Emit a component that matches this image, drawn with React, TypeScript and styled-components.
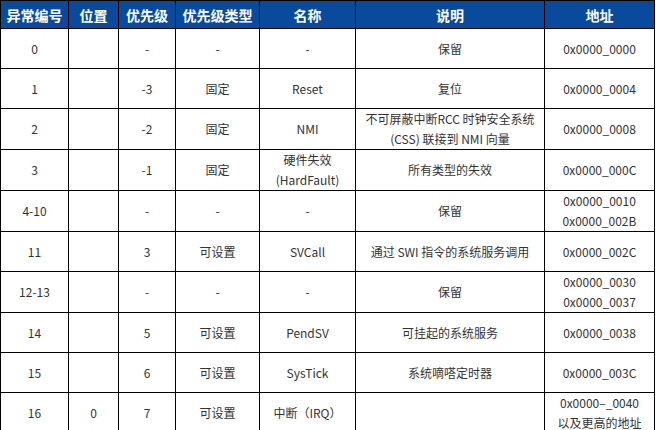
import React from "react";
import styled, { createGlobalStyle } from "styled-components";

const GlobalStyle = createGlobalStyle`
  html, body {
    margin: 0;
    padding: 0;
    background: #ffffff;
  }
  body {
    font-family: "Noto Sans CJK SC", "Noto Sans", sans-serif;
  }
`;

type Row = {
  id: string;
  pos?: string;
  priority: string;
  kind: string;
  name: React.ReactNode;
  desc: React.ReactNode;
  addr: React.ReactNode;
};

const rows: Row[] = [
  { id: "0", priority: "-", kind: "-", name: "-", desc: "保留", addr: "0x0000_0000" },
  { id: "1", priority: "-3", kind: "固定", name: "Reset", desc: "复位", addr: "0x0000_0004" },
  {
    id: "2",
    priority: "-2",
    kind: "固定",
    name: "NMI",
    desc: (
      <>
        不可屏蔽中断RCC 时钟安全系统
        <br />
        (CSS) 联接到 NMI 向量
      </>
    ),
    addr: "0x0000_0008",
  },
  {
    id: "3",
    priority: "-1",
    kind: "固定",
    name: (
      <>
        硬件失效
        <br />
        (HardFault)
      </>
    ),
    desc: "所有类型的失效",
    addr: "0x0000_000C",
  },
  {
    id: "4-10",
    priority: "-",
    kind: "-",
    name: "-",
    desc: "保留",
    addr: (
      <>
        0x0000_0010
        <br />
        0x0000_002B
      </>
    ),
  },
  { id: "11", priority: "3", kind: "可设置", name: "SVCall", desc: "通过 SWI 指令的系统服务调用", addr: "0x0000_002C" },
  {
    id: "12-13",
    priority: "-",
    kind: "-",
    name: "-",
    desc: "保留",
    addr: (
      <>
        0x0000_0030
        <br />
        0x0000_0037
      </>
    ),
  },
  { id: "14", priority: "5", kind: "可设置", name: "PendSV", desc: "可挂起的系统服务", addr: "0x0000_0038" },
  { id: "15", priority: "6", kind: "可设置", name: "SysTick", desc: "系统嘀嗒定时器", addr: "0x0000_003C" },
  {
    id: "16",
    pos: "0",
    priority: "7",
    kind: "可设置",
    name: "中断（IRQ）",
    desc: "",
    addr: (
      <>
        0x0000–_0040
        <br />
        以及更高的地址
      </>
    ),
  },
];

const widths = [68, 50, 57, 84, 96, 189, 110];
const headers = ["异常编号", "位置", "优先级", "优先级类型", "名称", "说明", "地址"];

const Table = styled.table`
  border-collapse: collapse;
  table-layout: fixed;
  width: 655px;
  border: 1px solid #000;
`;

const HeadCell = styled.th`
  height: 27px;
  padding: 0;
  background: #0a4a9c;
  color: #ffffff;
  font-size: 14px;
  font-weight: 700;
  line-height: 20px;
  text-align: center;
  vertical-align: middle;
  border: 1px solid #000;
  white-space: nowrap;
`;

const Cell = styled.td`
  height: 39px;
  padding: 0;
  color: #333;
  font-size: 12px;
  line-height: 20px;
  text-align: center;
  vertical-align: middle;
  border: 1px solid #000;
  white-space: nowrap;
`;

export default function App() {
  return (
    <>
      <GlobalStyle />
      <Table>
        <colgroup>
          {widths.map((w, i) => (
            <col key={i} style={{ width: w }} />
          ))}
        </colgroup>
        <thead>
          <tr>
            {headers.map((h) => (
              <HeadCell key={h}>{h}</HeadCell>
            ))}
          </tr>
        </thead>
        <tbody>
          {rows.map((r) => (
            <tr key={r.id}>
              <Cell>{r.id}</Cell>
              <Cell>{r.pos ?? ""}</Cell>
              <Cell>{r.priority}</Cell>
              <Cell>{r.kind}</Cell>
              <Cell>{r.name}</Cell>
              <Cell>{r.desc}</Cell>
              <Cell>{r.addr}</Cell>
            </tr>
          ))}
        </tbody>
      </Table>
    </>
  );
}
